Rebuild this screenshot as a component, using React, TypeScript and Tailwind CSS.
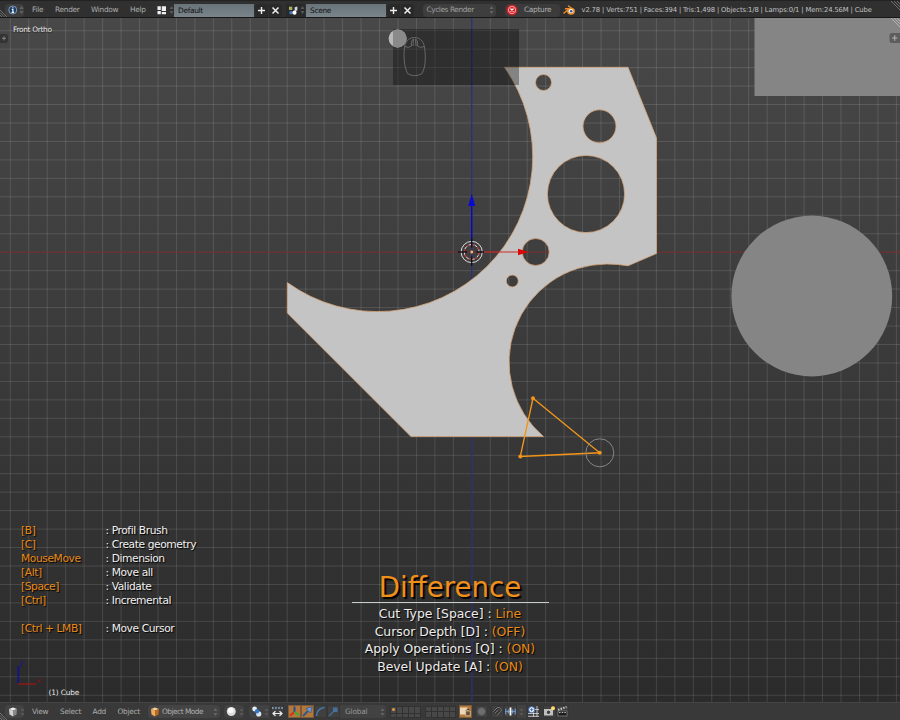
import React from "react";

const STEP = 18.46;
const OX = 471.8;
const OY = 252.2;

const seq = (n: number, from: number) => Array.from({ length: n }, (_, i) => i + from);

function circlePath(cx: number, cy: number, r: number) {
  return `M${cx - r} ${cy}a${r} ${r} 0 1 0 ${2 * r} 0a${r} ${r} 0 1 0 ${-2 * r} 0Z`;
}

const SHAPE =
  "M504.5 67.3H628L656.5 138V253.5L628 265.8Q618 264 607 264A98 98 0 0 0 543.5 436.6H411L287.3 313V282.6A155.1 155.1 0 0 0 504.5 67.3Z" +
  circlePath(543.5, 82.5, 8) +
  circlePath(599.5, 126.3, 16.5) +
  circlePath(586, 194, 38.6) +
  circlePath(535.7, 252, 13.5) +
  circlePath(512.3, 281, 6);

function Updown({ dim = false }: { dim?: boolean }) {
  return (
    <svg className="shrink-0" width="5" height="10" viewBox="0 0 5 10">
      <path d="M2.5 1L4.5 4H.5ZM2.5 9L.5 6H4.5Z" fill={dim ? "#585858" : "#646464"} />
    </svg>
  );
}

function Scenery() {
  return (
    <svg className="absolute inset-0" width="900" height="684" viewBox="0 18 900 684">
      <defs>
        <linearGradient id="sky" x1="0" y1="0" x2="0" y2="1">
          <stop offset="0" stopColor="#484848" />
          <stop offset="0.5" stopColor="#3a3a3a" />
          <stop offset="1" stopColor="#2b2b2b" />
        </linearGradient>
      </defs>
      <rect x="0" y="18" width="900" height="684" fill="url(#sky)" />
      <g stroke="#fff" strokeOpacity="0.12" strokeWidth="1">
        {seq(49, -25).map((i) => (
          <path key={"v" + i} d={`M${OX + i * STEP} 18V702`} />
        ))}
        {seq(37, -12).map((i) => (
          <path key={"h" + i} d={`M0 ${OY + i * STEP}H900`} />
        ))}
      </g>
      <path d={`M0 ${OY}H900`} stroke="#722626" strokeWidth="1" />
      <path d={`M${OX} 18V702`} stroke="#2b2b7c" strokeWidth="1.3" />
      <rect x="754.5" y="18" width="146" height="78" fill="#858585" />
      <circle cx="811.8" cy="296" r="80.4" fill="#858585" />
      <path d={SHAPE} fillRule="evenodd" fill="#c4c4c4" stroke="#d8a677" strokeWidth="0.8" />

      <path d="M471.7 205V246" stroke="#0808c8" strokeWidth="1.3" />
      <path d="M471.7 194L475.2 206H468.2Z" fill="#0a0ad0" />
      <path d="M484 252H519" stroke="#cf2a2a" strokeWidth="1.1" />
      <path d="M518 248.7L528.5 252L518 255.3Z" fill="#dc0808" />
      <g fill="none">
        <circle cx="471.7" cy="252" r="10.6" stroke="#dcdcdc" strokeWidth="1" />
        <circle cx="471.7" cy="252" r="7.5" stroke="#dedede" strokeWidth="1" />
        <circle cx="471.7" cy="252" r="7.5" stroke="#b02424" strokeWidth="1.2" strokeDasharray="3 2.9" />
        <path d="M458 252H467M476.5 252H484M471.7 238V247.5M471.7 256.5V266" stroke="#101018" strokeWidth="1.3" />
      </g>
      <circle cx="471.8" cy="252" r="1.9" fill="#efb184" stroke="#222" strokeWidth="0.6" />

      <path d="M533 398.3L599.7 452.8L520.3 456.4Z" stroke="#f2951a" strokeWidth="1.4" fill="none" />
      <g fill="#f2951a">
        <circle cx="533" cy="398.3" r="2" />
        <circle cx="599.7" cy="452.8" r="2" />
        <circle cx="520.3" cy="456.4" r="2" />
      </g>
      <circle cx="599.8" cy="452.8" r="14" fill="none" stroke="#858585" strokeWidth="1" />

      <rect x="393" y="29" width="126" height="56" fill="#000" fillOpacity="0.33" />
      <circle cx="397.6" cy="38.5" r="9" fill="#b9b9b9" />
      <path d="M393 30.8A9 9 0 1 1 393 46.2Z" fill="#8a8a8a" />
      <g fill="none" stroke="#6e6e6e" strokeWidth="0.9">
        <path d="M404.5 47C406 40 410 37.5 414.5 37.5S423 40 424.5 47C426 58 425.5 67 422 73.5Q414.5 78 407.5 73.5C404 66 403.5 57 404.5 47Z" />
        <path d="M404.5 46.5Q409 48.5 411.5 46M424.5 46.5Q420 48.5 417.5 46" />
        <path d="M411.5 46C411 42 412 39.5 413.5 39L413 46M417.5 46C418 42 417 39.5 415.5 39L416 46" />
      </g>

      <path d="M18.3 666V683.5" stroke="#14148c" strokeWidth="1.8" />
      <path d="M18 684H36" stroke="#8c1818" strokeWidth="1.5" />
      <path d="M20 662H23L20.5 666H22.5" stroke="#18188c" strokeWidth="0.9" fill="none" />
      <path d="M37.5 679L41 683M41 679L37.5 683" stroke="#821616" strokeWidth="1" />

      <path d="M0 34H5Q8 34 8 37V40Q8 43 5 43H0Z" fill="#343434" />
      <path d="M2 38.3H6M4 36.3V40.3" stroke="#858585" strokeWidth="1" />
      <path d="M900 33H892Q889.5 33 889.5 36V40Q889.5 43 892 43H900Z" fill="#5d5d5d" />
      <path d="M892 38H897.5M894.7 35.3V40.7" stroke="#b2b2b2" strokeWidth="1.1" />
      <path d="M891 18L900 27M894 18L900 24M897 18L900 21" stroke="#d2d2d2" strokeWidth="0.6" />
    </svg>
  );
}

function MenuWord({ w, children }: { w: string; children: React.ReactNode }) {
  return <span className={"shrink-0 text-[#adadad] " + w}>{children}</span>;
}

function PlusCross() {
  return (
    <div className="flex shrink-0 w-[27px] h-[13px] ml-px gap-px">
      <div className="w-[13px] bg-[#292929] rounded-l-sm flex items-center justify-center">
        <svg width="9" height="9" viewBox="0 0 9 9"><path d="M4.5 1V8M1 4.5H8" stroke="#eee" strokeWidth="1.4" /></svg>
      </div>
      <div className="w-[13px] bg-[#292929] rounded-r-sm flex items-center justify-center">
        <svg width="9" height="9" viewBox="0 0 9 9"><path d="M1.5 1.5L7.5 7.5M7.5 1.5L1.5 7.5" stroke="#eee" strokeWidth="1.5" /></svg>
      </div>
    </div>
  );
}

function Field({ children }: { children: React.ReactNode }) {
  return (
    <div className="shrink-0 w-[80px] h-[13px] bg-gradient-to-b from-[#69747a] to-[#7a858b] text-[#101010] pl-[4px] leading-[13px]">
      {children}
    </div>
  );
}

function TopBar() {
  return (
    <header className="relative flex items-center h-[18px] shrink-0 pl-[5px] pt-[2px] bg-[#303030] border-t border-b border-t-[#222] border-b-[#171717] text-[7.4px] tracking-[-0.3px]">
      <div className="flex items-center shrink-0 w-[19px] h-[13px] bg-[#3d3d3d] rounded-sm pl-[2.5px] gap-[2px]">
        <svg width="10" height="10" viewBox="0 0 10 10">
          <circle cx="5" cy="5" r="4.2" fill="#173c68" stroke="#9fb7d2" strokeWidth="0.8" />
          <path d="M5 2V3.3M4 4.5H5.2V7.5M3.8 7.5H6.4" stroke="#fff" strokeWidth="1.2" fill="none" />
        </svg>
        <Updown />
      </div>
      <nav className="flex shrink-0 ml-[8px] w-[123px]">
        <MenuWord w="w-[23px]">File</MenuWord>
        <MenuWord w="w-[36px]">Render</MenuWord>
        <MenuWord w="w-[39px]">Window</MenuWord>
        <MenuWord w="w-[25px]">Help</MenuWord>
      </nav>
      <div className="flex items-center shrink-0 w-[19px] gap-[3px] pl-[1.5px]">
        <svg width="10" height="10" viewBox="0 0 10 10"><path d="M.5 1H4V5H.5ZM.5 6H4V9.5H.5ZM5 1H9.5V6H5ZM5 7H9.5V9.5H5Z" fill="#efefef" /></svg>
        <Updown dim />
      </div>
      <Field>Default</Field>
      <PlusCross />
      <div className="flex items-center shrink-0 w-[19px] h-[13px] ml-[4px] bg-[#292929] pl-[1.5px] gap-[2px]">
        <svg width="11" height="11" viewBox="0 0 11 11">
          <path d="M1 1.5H4.5V5H1Z" fill="#a8ac5e" />
          <circle cx="3.2" cy="7.8" r="1.9" fill="#3f78bd" />
          <path d="M7 2L9.8 1.2V5.5L7 6Z" fill="#cfdbe4" />
          <circle cx="6.8" cy="7.8" r="2.2" fill="#fff" />
        </svg>
        <Updown dim />
      </div>
      <div className="w-px shrink-0" />
      <Field>Scene</Field>
      <PlusCross />
      <div className="flex items-center justify-between shrink-0 w-[73px] h-[13px] ml-[8.5px] pl-[4px] pr-[2px] bg-[#3e3e3e] rounded-sm text-[#a0a0a0] tracking-[-0.42px]">
        <span>Cycles Render</span>
        <Updown />
      </div>
      <div className="flex items-center shrink-0 w-[55px] h-[13px] ml-[9.5px] pl-[1px] gap-[6px] bg-[#3b3b3b] rounded-sm text-[#b0b0b0]">
        <svg width="12" height="12" viewBox="0 0 12 12">
          <path d="M3.8 .7H8.2L11.3 3.8V8.2L8.2 11.3H3.8L.7 8.2V3.8Z" fill="#cf1d25" />
          <circle cx="6" cy="6" r="3.6" fill="none" stroke="#f8cfcf" strokeWidth="0.8" />
          <path d="M4.5 4.5L7.5 7.5M7.5 4.5L4.5 7.5" stroke="#fff" strokeWidth="1.1" />
        </svg>
        <span>Capture</span>
      </div>
      <svg className="shrink-0 ml-[3px]" width="13" height="11" viewBox="0 0 13 11">
        <path d="M5.5 1L11 5M1 8L6.5 3.7M2.5 3.8H8" stroke="#e98b2a" strokeWidth="1.5" strokeLinecap="round" />
        <ellipse cx="8" cy="6.3" rx="3.9" ry="3.5" fill="#e98b2a" />
        <ellipse cx="8" cy="6.2" rx="2.3" ry="2.1" fill="#fff" />
        <circle cx="8.2" cy="6.2" r="1.3" fill="#245c9a" />
      </svg>
      <span className="ml-[5.5px] whitespace-nowrap text-[#c0c0c0] text-[6.8px] tracking-[-0.13px]">
        v2.78 | Verts:751 | Faces:394 | Tris:1,498 | Objects:1/8 | Lamps:0/1 | Mem:24.56M | Cube
      </span>
      <svg className="absolute right-0 top-0" width="9" height="9" viewBox="0 0 9 9"><path d="M0 0L9 9M3 0L9 6M6 0L9 3" stroke="#999" strokeWidth="0.6" /></svg>
      <svg className="absolute left-0 bottom-0" width="7" height="7" viewBox="0 0 7 7"><path d="M0 0L7 7M0 2.5L4.5 7M0 5L2 7" stroke="#999" strokeWidth="0.6" /></svg>
    </header>
  );
}

function Layers({ first = false }: { first?: boolean }) {
  return (
    <div className="grid grid-cols-5 shrink-0 w-[31px] h-[12px] gap-px bg-[#323232] border border-[#323232]">
      {seq(10, 0).map((i) => (
        <div key={i} className="bg-[#484848] flex items-center justify-center">
          {first && i === 0 && <div className="w-[3px] h-[3px] rounded-full bg-[#e69845]" />}
        </div>
      ))}
    </div>
  );
}

function Cube({ orange = false }: { orange?: boolean }) {
  return (
    <svg className="shrink-0" width="10" height="10" viewBox="0 0 10 10">
      <path d="M5 .6L9 2L5 3.5L1 2Z" fill={orange ? "#f8d09c" : "#f2f2f2"} />
      <path d="M1 2L5 3.5V9.5L1.5 7.5Z" fill={orange ? "#f0ac5e" : "#d0d0d0"} />
      <path d="M9 2L5 3.5V9.5L8.5 7.5Z" fill={orange ? "#bb6a20" : "#888"} />
    </svg>
  );
}

function Tool({ on = false, children }: { on?: boolean; children: React.ReactNode }) {
  return (
    <div className={"flex items-center justify-center shrink-0 w-[13px] h-[13px] border " + (on ? "bg-[#b4793a] border-[#7c5a38]" : "bg-[#404040] border-[#363636]")}>
      <svg className="shrink-0" width="11" height="11" viewBox="0 0 11 11" fill="none">{children}</svg>
    </div>
  );
}

function BottomBar() {
  return (
    <footer className="relative flex items-center h-[18px] shrink-0 pl-[5px] bg-[#393939] border-t border-t-[#454545] text-[7.4px] tracking-[-0.3px]">
      <div className="flex items-center shrink-0 w-[19px] h-[13px] pl-[3px] gap-[2px] bg-[#434343] rounded-sm">
        <Cube />
        <Updown dim />
      </div>
      <nav className="flex shrink-0 ml-[8px] w-[116px]">
        <MenuWord w="w-[28px]">View</MenuWord>
        <MenuWord w="w-[32.5px]">Select</MenuWord>
        <MenuWord w="w-[25px]">Add</MenuWord>
        <MenuWord w="w-[30px]">Object</MenuWord>
      </nav>
      <div className="flex items-center shrink-0 w-[72px] h-[13px] pl-[2px] pr-[2px] bg-[#444] rounded-sm text-[#b0b0b0] tracking-[-0.5px]">
        <Cube orange />
        <span className="ml-[2px] grow whitespace-nowrap">Object Mode</span>
        <Updown />
      </div>
      <div className="flex items-center shrink-0 w-[20px] h-[13px] ml-[4px] pl-[1.5px] gap-[2px] bg-[#424242] rounded-sm">
        <svg width="11" height="11" viewBox="0 0 11 11"><circle cx="5.3" cy="5.5" r="4.5" fill="#dcdcdc" /><circle cx="4.7" cy="4.5" r="2.8" fill="#fafafa" /></svg>
        <Updown dim />
      </div>
      <div className="flex items-center shrink-0 w-[20px] h-[13px] ml-[5px] pl-[1.5px] gap-[2px] bg-[#424242] rounded-l-sm">
        <svg width="11" height="11" viewBox="0 0 11 11"><circle cx="3.6" cy="3" r="2.4" fill="#e8eef5" /><circle cx="7.7" cy="7.9" r="2.6" fill="#dce5ef" /><circle cx="6" cy="5.3" r="2.2" fill="#3476c8" /></svg>
        <Updown dim />
      </div>
      <div className="ml-[2px] flex"><Tool><path d="M0 2H11" stroke="#8fb0dc" strokeWidth="1.6" strokeDasharray="1.6 1.5" /><path d="M1.5 7.5H9.5M3.5 5.2L1 7.5L3.5 9.8M7.5 5.2L10 7.5L7.5 9.8" stroke="#eee" strokeWidth="1.2" /></Tool></div>
      <div className="ml-[4px] flex">
        <Tool on><path d="M5.5 6V.5" stroke="#244f98" strokeWidth="2" /><path d="M5.5 6L1 9.5" stroke="#d92e22" strokeWidth="2" /><path d="M5.5 6L10 9.5" stroke="#3fae33" strokeWidth="2" /></Tool>
        <Tool on><path d="M1 10L6 5" stroke="#31598f" strokeWidth="2.2" /><path d="M10.3 .7L8.5 7L4 2.5Z" fill="#6b9ee0" stroke="#244774" strokeWidth=".6" /></Tool>
        <Tool><path d="M1.5 10Q2 2.5 9.5 1.5" stroke="#4777a7" strokeWidth="1.5" /></Tool>
        <Tool><path d="M1 10L6 5" stroke="#426c98" strokeWidth="1.5" /><path d="M5 1.5H9.5V6H5Z" fill="#46719f" /></Tool>
      </div>
      <div className="flex items-center justify-between shrink-0 w-[46px] h-[13px] pl-[5px] pr-[1px] bg-[#424242] rounded-r-sm text-[#979797] tracking-[-0.2px]">
        <span>Global</span>
        <Updown />
      </div>
      <div className="flex shrink-0 ml-[4px] gap-[4px]"><Layers first /><Layers /></div>
      <div className="ml-[3px] flex shrink-0 gap-[3px]">
        <Tool on><path d="M0 1.5H7.5V8.5H0Z" fill="#ead7b8" /><path d="M6 5V4.5Q8 1.5 9.8 4.5V5" stroke="#4a3d2c" strokeWidth="1" /><path d="M5.7 5H10.3V9.8H5.7Z" fill="#65513a" stroke="#e3c89f" strokeWidth=".7" /></Tool>
        <Tool><circle cx="5.5" cy="5.5" r="4" fill="#6e6e6e" stroke="#505050" /></Tool>
      </div>
      <div className="ml-[3px] flex shrink-0">
        <Tool><path d="M1.2 5.5L5 2C7.5 .2 10.5 3 8.7 5.5L5 9.6M3 7.2L6.2 4.2" stroke="#2a2a2a" strokeWidth="2.2" /><path d="M1.2 5.5L5 2C7.5 .2 10.5 3 8.7 5.5L5 9.6M3 7.2L6.2 4.2" stroke="#8c8c8c" strokeWidth="1" /></Tool>
        <Tool><path d="M0 5.5H11" stroke="#6e9cd1" strokeWidth=".8" /><path d="M.8 2.5V8.5M3.3 3.5V7.5M7.7 3.5V7.5M10.2 2.5V8.5" stroke="#7fa8dc" /><path d="M5.5 1.5V9.5" stroke="#fff" strokeWidth="1.8" /></Tool>
        <div className="flex items-center w-[9px] bg-[#424242] pl-[2px]"><Updown dim /></div>
      </div>
      <div className="ml-[1px] flex shrink-0 gap-[3px]">
        <Tool><path d="M0 7.5H11M0 10.3H11M5.5 3V11M9 0V11M7 3.5H11" stroke="#ddd" strokeWidth=".8" /><circle cx="3.7" cy="3.7" r="3" fill="#fff" stroke="#3d72b9" /><path d="M3.7 2V5.4M2 3.7H5.4" stroke="#3d72b9" /></Tool>
        <div className="flex">
          <Tool><path d="M0 3H9V9.5H0Z" fill="#bebebe" /><circle cx="4.5" cy="6.3" r="2.2" fill="#414141" stroke="#eee" strokeWidth=".7" /><circle cx="9" cy="2.2" r="2" fill="#ffdc65" /></Tool>
          <Tool><path d="M1 5H10V10H1Z" fill="#1f1f1f" stroke="#8b8b8b" strokeWidth=".6" /><path d="M1 3.8L9.5 1" stroke="#ccc" strokeWidth="2" strokeDasharray="1.5 1.2" /><path d="M2 6.5H9" stroke="#bbb" strokeWidth="1.2" strokeDasharray="1.5 1.2" /></Tool>
        </div>
      </div>
      <svg className="absolute left-0 bottom-0" width="7" height="7" viewBox="0 0 7 7"><path d="M0 0L7 7M0 2.5L4.5 7M0 5L2 7" stroke="#999" strokeWidth="0.6" /></svg>
    </footer>
  );
}

const SHORTCUTS: [string, string][] = [
  ["[B]", "Profil Brush"],
  ["[C]", "Create geometry"],
  ["MouseMove", "Dimension"],
  ["[Alt]", "Move all"],
  ["[Space]", "Validate"],
  ["[Ctrl]", "Incremental"],
  ["", ""],
  ["[Ctrl + LMB]", "Move Cursor"],
];

const SETTINGS: [string, string][] = [
  ["Cut Type [Space]", "Line"],
  ["Cursor Depth [D]", "(OFF)"],
  ["Apply Operations [Q]", "(ON)"],
  ["Bevel Update [A]", "(ON)"],
];

export default function App() {
  return (
    <div className="w-[900px] h-[720px] flex flex-col overflow-hidden font-['DejaVu_Sans',sans-serif]">
      <TopBar />
      <main className="relative h-[684px] shrink-0 overflow-hidden">
        <Scenery />
        <div className="absolute left-[13px] top-[6px] text-[7.4px] tracking-[-0.3px] leading-[11px] text-[#e8e8e8] [text-shadow:0_1px_1px_#222]">Front Ortho</div>
        <div className="absolute left-[21px] top-[506px] text-[10.7px] tracking-[-0.42px] leading-[14px] [text-shadow:1px_1px_1px_#000]">
          {SHORTCUTS.map(([key, label], i) => (
            <div key={i} className="flex h-[14px]">
              <span className="w-[84.5px] text-[#e88b18]">{key}</span>
              {label && <span className="text-[#f0f0f0] whitespace-nowrap">: {label}</span>}
            </div>
          ))}
        </div>
        <section className="absolute left-[351px] top-[552px] w-[198px] flex flex-col items-center text-center [text-shadow:1px_1px_1px_#000]">
          <h1 className="text-[27.6px] leading-[36px] h-[32px] text-[#f0901a] [text-shadow:2px_2px_1px_#000]">Difference</h1>
          <div className="w-[197px] h-px bg-[#c8cec8]" />
          <div className="pt-[2px] text-[12.4px] tracking-[-0.03px] leading-[17.6px] text-[#ededed]">
            {SETTINGS.map(([label, value]) => (
              <div key={label} className="whitespace-nowrap">
                {label} : <span className="text-[#e88b18]">{value}</span>
              </div>
            ))}
          </div>
        </section>
        <div className="absolute left-[48.5px] top-[669px] text-[7.4px] tracking-[-0.15px] leading-[11px] text-[#e8e8e8]">(1) Cube</div>
      </main>
      <BottomBar />
    </div>
  );
}
